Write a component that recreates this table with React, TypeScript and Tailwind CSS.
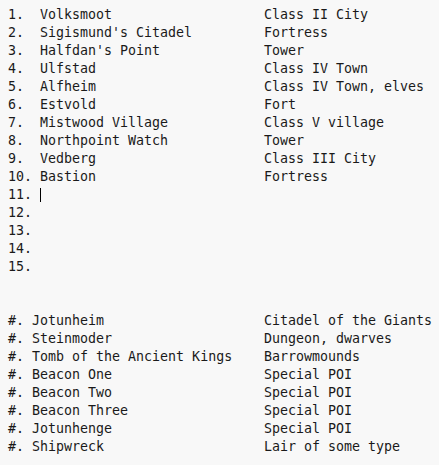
import React from 'react';

const places: [string, string][] = [
  ['1.  Volksmoot', 'Class II City'],
  ["2.  Sigismund's Citadel", 'Fortress'],
  ["3.  Halfdan's Point", 'Tower'],
  ['4.  Ulfstad', 'Class IV Town'],
  ['5.  Alfheim', 'Class IV Town, elves'],
  ['6.  Estvold', 'Fort'],
  ['7.  Mistwood Village', 'Class V village'],
  ['8.  Northpoint Watch', 'Tower'],
  ['9.  Vedberg', 'Class III City'],
  ['10. Bastion', 'Fortress'],
];

const extras: [string, string][] = [
  ['#. Jotunheim', 'Citadel of the Giants'],
  ['#. Steinmoder', 'Dungeon, dwarves'],
  ['#. Tomb of the Ancient Kings', 'Barrowmounds'],
  ['#. Beacon One', 'Special POI'],
  ['#. Beacon Two', 'Special POI'],
  ['#. Beacon Three', 'Special POI'],
  ['#. Jotunhenge', 'Special POI'],
  ['#. Shipwreck', 'Lair of some type'],
];

function Row({ left, right }: { left: string; right?: string }) {
  return (
    <div className="flex h-[18px] items-center">
      <span className="w-[256px] shrink-0">{left}</span>
      {right && <span>{right}</span>}
    </div>
  );
}

export default function App() {
  return (
    <div
      className="min-h-[465px] w-[439px] bg-[#f8f8f8] pl-2 pt-[6px] text-[13.3px] leading-[18px] text-[#1a1a1a] whitespace-pre"
      style={{ fontFamily: '"DejaVu Sans Mono", "Liberation Mono", monospace' }}
    >
      {places.map(([l, r]) => (
        <Row key={l} left={l} right={r} />
      ))}
      <div className="flex h-[18px] items-center">
        <span>11. </span>
        <span className="inline-block h-[14px] w-px bg-black" />
      </div>
      <Row left="12." />
      <Row left="13." />
      <Row left="14." />
      <Row left="15." />
      <div className="h-[18px]" />
      <div className="h-[18px]" />
      {extras.map(([l, r]) => (
        <Row key={l} left={l} right={r} />
      ))}
    </div>
  );
}
